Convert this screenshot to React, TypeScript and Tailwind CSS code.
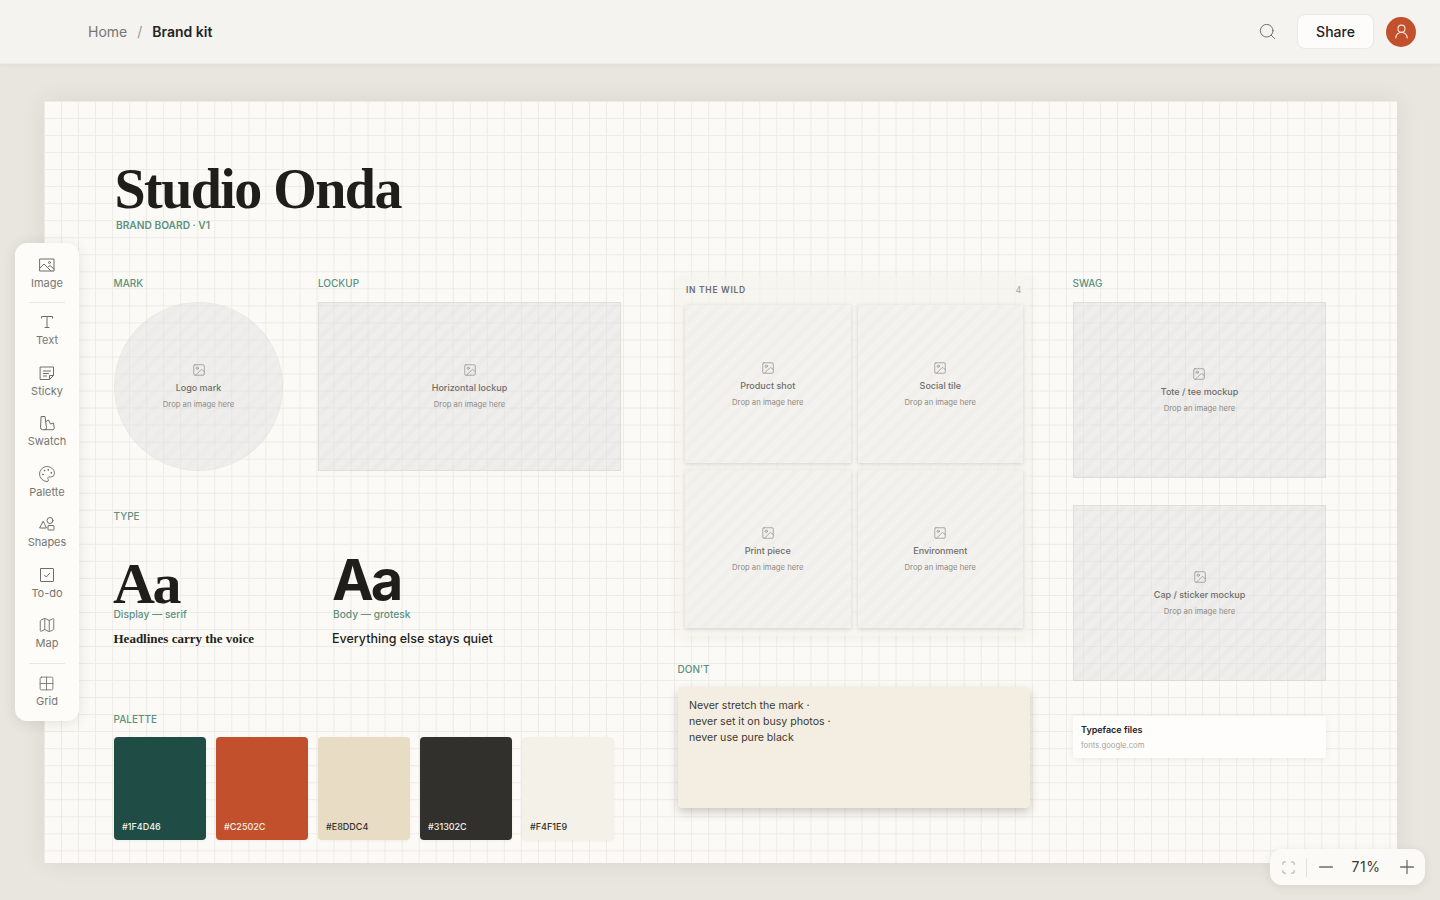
import React from 'react';
import {
  Image as ImageIcon,
  Palette,
  Map as MapIcon,
  Grid2x2,
  Search,
  UserRound,
  Scan,
  Minus,
  Plus,
} from 'lucide-react';

const sans = 'font-["Inter","Noto_Sans",sans-serif]';
const serif = 'font-["Liberation_Serif",serif]';

function ToolSvg({ children }: { children: React.ReactNode }) {
  return (
    <svg width="16" height="16" viewBox="0 0 16 16" fill="none" stroke="currentColor" strokeWidth="1" strokeLinejoin="round" strokeLinecap="round">
      {children}
    </svg>
  );
}

const tools = [
  {
    label: 'Image',
    icon: (
      <ToolSvg>
        <rect x="1" y="2" width="14" height="12" />
        <circle cx="10.5" cy="5.5" r="1" />
        <path d="M1 11l4-4 7 7M8.5 10.5L11 8.5l4 3.5" />
      </ToolSvg>
    ),
  },
  { divider: 'mt-[2.5px] mb-[3px]' },
  {
    label: 'Text',
    icon: (
      <ToolSvg>
        <path d="M2.5 4V2.5h11V4M8 2.5v11M6 13.5h4" />
      </ToolSvg>
    ),
  },
  {
    label: 'Sticky',
    icon: (
      <ToolSvg>
        <path d="M1.5 2h13v8.5L10.5 14.5h-9z" />
        <path d="M4.5 6h7M4.5 8.5h5M4.5 11h3M10.5 14.5v-4h4" />
      </ToolSvg>
    ),
  },
  {
    label: 'Swatch',
    icon: (
      <ToolSvg>
        <path d="M2.5 1.5h3.5l1.5 11a2 2 0 0 1-2 2.2H3.5a2 2 0 0 1-2-2.2z" />
        <path d="M7 6.5l2.5-1.5 2 4 3-1 .8 5.2a1.5 1.5 0 0 1-1.5 1.5H5.5" />
      </ToolSvg>
    ),
  },
  { label: 'Palette', icon: <Palette size={18} strokeWidth={1.2} /> },
  {
    label: 'Shapes',
    icon: (
      <ToolSvg>
        <path d="M4.3 5.5L7.5 12H1z" />
        <circle cx="11" cy="4.5" r="3" />
        <rect x="9" y="9.5" width="6" height="4.5" rx="0.5" />
      </ToolSvg>
    ),
  },
  {
    label: 'To-do',
    icon: (
      <ToolSvg>
        <rect x="1.5" y="1.5" width="13" height="13" rx="0.5" />
        <path d="M5.5 8.2l1.8 1.8 3.2-3.6" />
      </ToolSvg>
    ),
  },
  { label: 'Map', icon: <MapIcon size={18} strokeWidth={1.2} /> },
  { divider: 'mt-[3px] mb-[3.5px]' },
  { label: 'Grid', icon: <Grid2x2 size={17} strokeWidth={1.2} /> },
];

const swatches = [
  { hex: '#1F4D46', box: 'bg-[#1f4d46] text-[#f4f1e9]' },
  { hex: '#C2502C', box: 'bg-[#c2502c] text-[#f4f1e9]' },
  { hex: '#E8DDC4', box: 'bg-[#e8ddc4] text-[#31302c]' },
  { hex: '#31302C', box: 'bg-[#31302c] text-[#f4f1e9]' },
  { hex: '#F4F1E9', box: 'bg-[#f4f1e9] text-[#31302c]' },
];

function SectionLabel({ children, className }: { children: React.ReactNode; className: string }) {
  return (
    <div className={`absolute text-[10px] leading-3 font-medium text-[#5e917f] ${className}`}>{children}</div>
  );
}

const stripes =
  'bg-[repeating-linear-gradient(135deg,rgba(120,118,118,0.025)_0,rgba(120,118,118,0.025)_5px,transparent_5px,transparent_11px)]';

function DropText({ title }: { title: string }) {
  return (
    <div className="flex flex-col items-center text-center">
      <ImageIcon size={14} strokeWidth={1.25} className="text-[#8f8e89]" />
      <div className="mt-[5px] text-[9px] leading-[12px] font-medium text-[#6e6d69]">{title}</div>
      <div className="mt-[6px] text-[7.7px] leading-[10px] text-[#8c8b86]">Drop an image here</div>
    </div>
  );
}

function Slot({ title, className }: { title: string; className: string }) {
  return (
    <div className={`absolute flex items-center justify-center border bg-[#e0dfdf]/45 ${stripes} ${className}`}>
      <DropText title={title} />
    </div>
  );
}

export default function App() {
  return (
    <div className={`relative h-[900px] w-[1440px] overflow-hidden bg-[#e8e6df] ${sans}`}>
      <header className="relative z-10 flex h-16 items-center border-b border-[#eceae4] bg-[#f4f3ef] pr-6 pl-[88px] shadow-[0_1px_4px_rgba(60,55,40,0.06)]">
        <div className="flex items-center text-sm">
          <span className="text-[#777672]">Home</span>
          <span className="mx-[10px] text-[#9b9a95]">/</span>
          <span className="font-semibold text-[#24231f]">Brand kit</span>
        </div>
        <div className="ml-auto flex items-center">
          <Search size={19} strokeWidth={1.25} className="text-[#6f6e6a]" />
          <button className="ml-[20px] h-[35px] w-[77px] rounded-lg border border-[#ebe9e3] bg-[#fdfcfa] text-sm font-medium text-[#24231f]">
            Share
          </button>
          <div className="ml-[12px] flex h-[30px] w-[30px] items-center justify-center rounded-full bg-[#c2502c] text-[#f8e6dc]">
            <UserRound size={17} strokeWidth={1.5} />
          </div>
        </div>
      </header>

      {/* Board */}
      <main className="absolute top-[101px] left-[44px] h-[762px] w-[1353px] bg-[#fbfaf6] bg-[linear-gradient(#ecebe4_1px,transparent_1px),linear-gradient(90deg,#ecebe4_1px,transparent_1px)] bg-[size:17.04px_17.04px] shadow-[0_0_24px_rgba(60,55,40,0.08)]">
        <h1 className={`absolute top-[64px] left-[70.5px] text-[56px] leading-[48px] font-bold tracking-[-1.56px] text-[#1f1e1a] ${serif}`}>
          Studio Onda
        </h1>
        <div className="absolute top-[118px] left-[72px] text-[10.2px] leading-3 font-semibold text-[#5e917f]">
          BRAND BOARD · V1
        </div>

        <SectionLabel className="top-[176px] left-[69.5px]">MARK</SectionLabel>
        <Slot title="Logo mark" className="top-[201px] left-[70px] h-[169px] w-[169px] rounded-full border-[#dfded9]/30" />

        <SectionLabel className="top-[176px] left-[274px]">LOCKUP</SectionLabel>
        <Slot title="Horizontal lockup" className="top-[201px] left-[274px] h-[169px] w-[303px] border-[#d8d7d2]/70" />

        {/* In the wild */}
        <section className="absolute top-[175px] left-[634px] h-[360px] w-[352px] bg-[#f3f2ee]/70 shadow-[0_2px_12px_rgba(60,55,40,0.06)]">
          <div className="flex h-[29px] items-center justify-between pr-2 pl-2 text-[8.5px] font-semibold tracking-[0.7px] text-[#6e6d69]">
            <span>IN THE WILD</span>
            <span className="font-normal text-[#a5a49f]">4</span>
          </div>
          <div className="grid grid-cols-2 gap-x-[7px] gap-y-[7px] px-[7px]">
            {['Product shot', 'Social tile', 'Print piece', 'Environment'].map((t) => (
              <div
                key={t}
                className={`flex h-[158px] items-center justify-center bg-[#f3f2ef] ${stripes} shadow-[0_1px_4px_rgba(60,55,40,0.18)]`}
              >
                <DropText title={t} />
              </div>
            ))}
          </div>
        </section>

        <SectionLabel className="top-[176px] left-[1028.5px]">SWAG</SectionLabel>
        <Slot title="Tote / tee mockup" className="top-[201px] left-[1029px] h-[176px] w-[253px] border-[#d8d7d2]/70" />
        <Slot title="Cap / sticker mockup" className="top-[404px] left-[1029px] h-[176px] w-[253px] border-[#d8d7d2]/70" />

        <SectionLabel className="top-[409px] left-[69.5px]">TYPE</SectionLabel>
        <div className={`absolute top-[458px] left-[69px] text-[58px] leading-[49px] font-bold tracking-[-2.5px] text-[#1f1e1a] ${serif}`}>
          Aa
        </div>
        <div className="absolute top-[507px] left-[69.5px] text-[10.2px] leading-3 font-medium text-[#5e917f]">
          Display — serif
        </div>
        <div className={`absolute top-[529px] left-[69.5px] text-[13px] leading-[18px] font-bold text-[#1f1e1a] ${serif}`}>
          Headlines carry the voice
        </div>

        <div className="absolute top-[456px] left-[288px] text-[56px] leading-[46px] font-bold tracking-[-3px] text-[#1f1e1a]">
          Aa
        </div>
        <div className="absolute top-[507px] left-[289px] text-[10.2px] leading-3 font-medium text-[#5e917f]">
          Body — grotesk
        </div>
        <div className="absolute top-[529px] left-[288px] text-[12.5px] leading-[18px] font-medium text-[#1f1e1a]">
          Everything else stays quiet
        </div>

        <SectionLabel className="top-[612px] left-[69.5px]">PALETTE</SectionLabel>
        <div className="absolute top-[636px] left-[70px] flex gap-[10.5px]">
          {swatches.map((s) => (
            <div
              key={s.hex}
              className={`flex h-[103px] w-[91.5px] items-end rounded-[4px] px-2 pb-[7px] text-[9px] leading-[12px] font-medium shadow-[0_1px_3px_rgba(60,55,40,0.06)] ${s.box}`}
            >
              {s.hex}
            </div>
          ))}
        </div>

        <SectionLabel className="top-[562px] left-[633.5px]">DON'T</SectionLabel>
        <div className="absolute top-[586px] left-[634px] h-[121px] w-[352px] rounded-[4px] bg-[#f4eee2] px-[11px] pt-[11px] text-[10.6px] leading-4 text-[#3a3935] shadow-[0_4px_10px_rgba(60,55,40,0.25)]">
          Never stretch the mark ·<br />
          never set it on busy photos ·<br />
          never use pure black
        </div>

        <div className="absolute top-[615px] left-[1029px] h-[42px] w-[253px] rounded-[2px] bg-[#fefdfb] px-2 pt-[8px] shadow-[0_1px_6px_rgba(60,55,40,0.08)]">
          <div className="text-[9px] leading-3 font-semibold text-[#24231f]">Typeface files</div>
          <div className="mt-[5px] text-[7.7px] leading-[10px] text-[#a5a49f]">fonts.google.com</div>
        </div>
      </main>

      {/* Left toolbar */}
      <aside className="absolute top-[243px] left-[15px] z-20 flex w-16 flex-col items-center rounded-xl bg-[#fdfcf9] pt-[6px] pb-[3px] shadow-[0_2px_14px_rgba(60,55,40,0.12)]">
        {tools.map((tool, i) =>
          tool.divider ? (
            <div key={i} className={`h-px w-9 bg-[#e9e7e1] ${tool.divider}`} />
          ) : (
            <div key={i} className="flex h-[50.5px] flex-col items-center justify-center gap-[2px] text-[#6e6d69]">
              <div className="flex h-4 items-center justify-center">{tool.icon}</div>
              <span className="text-[11px] leading-[16px] text-[#777672]">{tool.label}</span>
            </div>
          ),
        )}
      </aside>

      {/* Zoom control */}
      <div className="absolute top-[849px] left-[1270px] z-20 flex h-9 w-[155px] items-center rounded-xl bg-[#fbfaf7] text-[#6e6d69] shadow-[0_2px_10px_rgba(60,55,40,0.1)]">
        <div className="flex w-[36px] justify-center">
          <Scan size={15} strokeWidth={1.25} className="text-[#8f8e89]" />
        </div>
        <div className="h-[19px] w-px bg-[#e4e2dc]" />
        <Minus size={22} strokeWidth={1.4} className="ml-[7.5px]" />
        <span className="ml-[13.5px] w-[32px] text-center text-sm tracking-[0.5px] text-[#3a3935]">71%</span>
        <Plus size={22} strokeWidth={1.4} className="ml-[13.5px]" />
      </div>
    </div>
  );
}
